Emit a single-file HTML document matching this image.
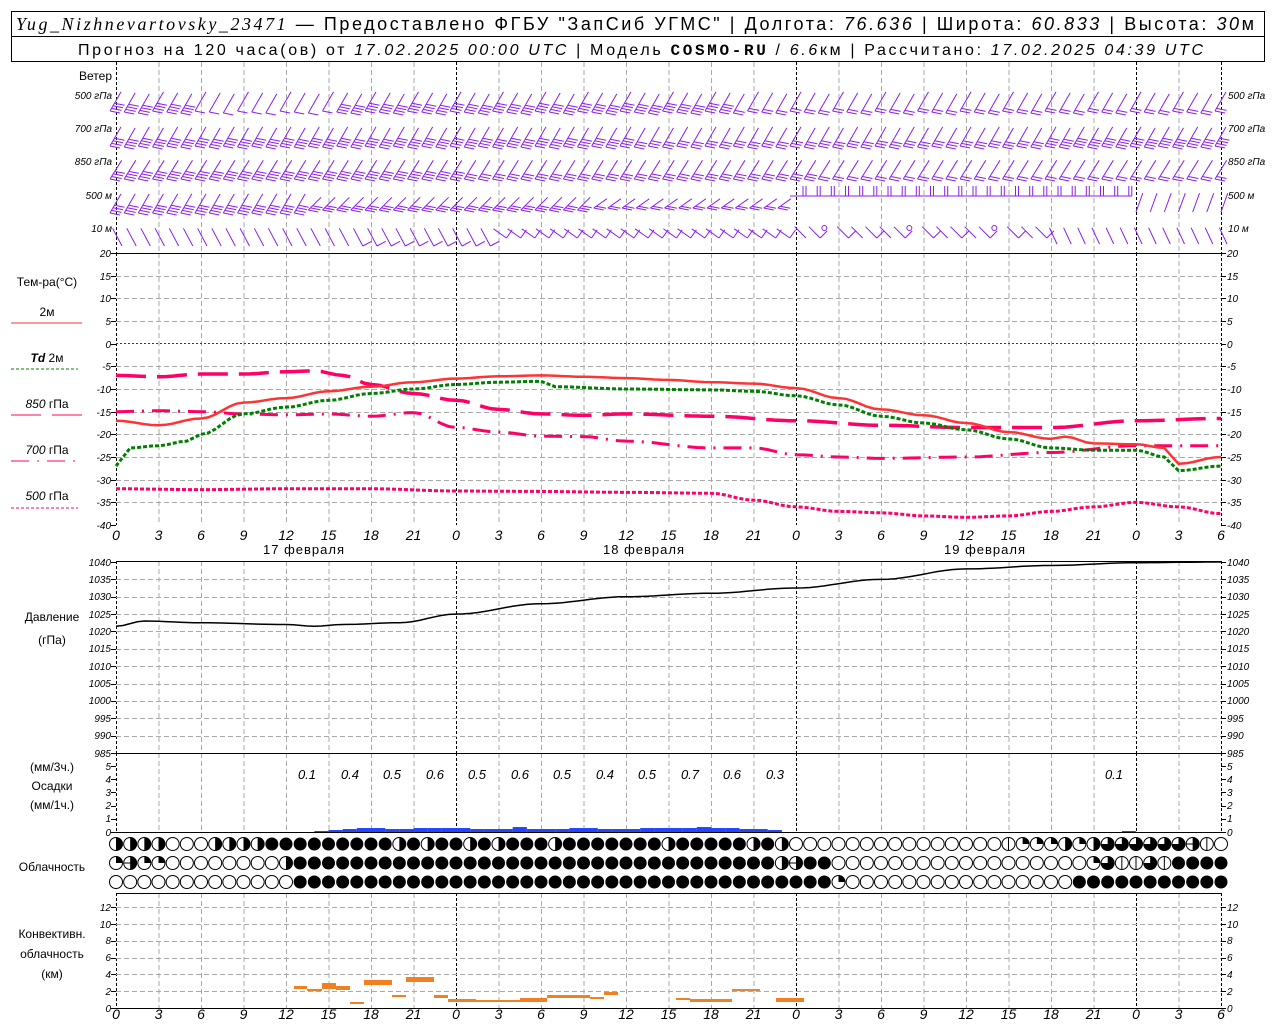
<!DOCTYPE html>
<html><head><meta charset="utf-8"><style>
html,body{margin:0;padding:0;background:#fff;width:1280px;height:1024px;overflow:hidden}
svg{display:block}
text{font-family:"Liberation Sans",sans-serif;fill:#000}
.n{font-size:10px;font-style:italic}
.l{font-size:12px}
</style></head><body>
<svg id="s" width="1280" height="1024" xmlns="http://www.w3.org/2000/svg">
<rect x="11.5" y="11.5" width="1253" height="50" fill="none" stroke="#000"/>
<line x1="11" y1="36.5" x2="1265" y2="36.5" stroke="#000"/>
<text x="16" y="30" style="font-size:18px" textLength="1238" lengthAdjust="spacing"><tspan style="font-family:'Liberation Serif',serif;font-style:italic">Yug_Nizhnevartovsky_23471</tspan> — Предоставлено ФГБУ "ЗапСиб УГМС" | Долгота: <tspan font-style="italic">76.636</tspan> | Широта: <tspan font-style="italic">60.833</tspan> | Высота: <tspan font-style="italic">30</tspan>м</text>
<text x="78" y="55" style="font-size:16px" textLength="1125" lengthAdjust="spacing">Прогноз на 120 часа(ов) от <tspan font-style="italic">17.02.2025 00:00 UTC</tspan>  | Модель <tspan style="font-family:'Liberation Mono',monospace;font-weight:bold">COSMO-RU</tspan> / <tspan font-style="italic">6.6</tspan>км | Рассчитано: <tspan font-style="italic">17.02.2025 04:39 UTC</tspan></text>
<g id="grid"></g>
<g id="data"></g>
<text class="l" x="112" y="80" text-anchor="end">Ветер</text>
<g class="n" text-anchor="end">
<text x="112" y="99">500 гПа</text><text x="112" y="132">700 гПа</text><text x="112" y="165">850 гПа</text><text x="112" y="199">500 м</text><text x="112" y="232">10   м</text>
</g>
<g class="n">
<text x="1228" y="99">500 гПа</text><text x="1228" y="132">700 гПа</text><text x="1228" y="165">850 гПа</text><text x="1228" y="199">500 м</text><text x="1228" y="232">10   м</text>
</g>
<text class="l" x="47" y="286" text-anchor="middle">Тем-ра(°C)</text>
<text class="l" x="47" y="316" text-anchor="middle">2м</text>
<line x1="11" y1="323" x2="82" y2="323" stroke="#ff3333"/>
<text class="l" x="47" y="362" text-anchor="middle"><tspan font-style="italic" font-weight="bold">Td</tspan>  2м</text>
<line x1="11" y1="369" x2="78" y2="369" stroke="#008000" stroke-dasharray="3,2"/>
<text class="l" x="47" y="408" text-anchor="middle"><tspan font-style="italic">850</tspan> гПа</text>
<line x1="11" y1="415" x2="82" y2="415" stroke="#ff0066" stroke-dasharray="30,11"/>
<text class="l" x="47" y="454" text-anchor="middle"><tspan font-style="italic">700</tspan> гПа</text>
<line x1="11" y1="461" x2="78" y2="461" stroke="#ff0066" stroke-dasharray="18,8,2,8"/>
<text class="l" x="47" y="500" text-anchor="middle"><tspan font-style="italic">500</tspan> гПа</text>
<line x1="11" y1="508" x2="78" y2="508" stroke="#ff0066" stroke-dasharray="3,2"/>
<text class="l" x="52" y="621" text-anchor="middle">Давление</text>
<text class="l" x="52" y="644" text-anchor="middle">(гПа)</text>
<text class="l" x="52" y="771" text-anchor="middle">(мм/3ч.)</text>
<text class="l" x="52" y="790" text-anchor="middle">Осадки</text>
<text class="l" x="52" y="809" text-anchor="middle">(мм/1ч.)</text>
<text class="l" x="52" y="871" text-anchor="middle">Облачность</text>
<text class="l" x="52" y="938" text-anchor="middle">Конвективн.</text>
<text class="l" x="52" y="958" text-anchor="middle">облачность</text>
<text class="l" x="52" y="978" text-anchor="middle">(км)</text>
<g class="n" text-anchor="end">
<text x="111" y="257">20</text><text x="111" y="280">15</text><text x="111" y="302">10</text><text x="111" y="325">5</text><text x="111" y="348">0</text><text x="111" y="370">-5</text><text x="111" y="393">-10</text><text x="111" y="416">-15</text><text x="111" y="438">-20</text><text x="111" y="461">-25</text><text x="111" y="484">-30</text><text x="111" y="506">-35</text><text x="111" y="529">-40</text>
<text x="111" y="566">1040</text><text x="111" y="583">1035</text><text x="111" y="600">1030</text><text x="111" y="618">1025</text><text x="111" y="635">1020</text><text x="111" y="652">1015</text><text x="111" y="670">1010</text><text x="111" y="687">1005</text><text x="111" y="704">1000</text><text x="111" y="722">995</text><text x="111" y="739">990</text><text x="111" y="757">985</text>
<text x="111" y="770">5</text><text x="111" y="783">4</text><text x="111" y="796">3</text><text x="111" y="809">2</text><text x="111" y="822">1</text><text x="111" y="836">0</text>
<text x="111" y="911">12</text><text x="111" y="928">10</text><text x="111" y="944">8</text><text x="111" y="961">6</text><text x="111" y="978">4</text><text x="111" y="995">2</text><text x="111" y="1012">0</text>
</g>
<g class="n">
<text x="1227" y="257">20</text><text x="1227" y="280">15</text><text x="1227" y="302">10</text><text x="1227" y="325">5</text><text x="1227" y="348">0</text><text x="1227" y="370">-5</text><text x="1227" y="393">-10</text><text x="1227" y="416">-15</text><text x="1227" y="438">-20</text><text x="1227" y="461">-25</text><text x="1227" y="484">-30</text><text x="1227" y="506">-35</text><text x="1227" y="529">-40</text>
<text x="1227" y="566">1040</text><text x="1227" y="583">1035</text><text x="1227" y="600">1030</text><text x="1227" y="618">1025</text><text x="1227" y="635">1020</text><text x="1227" y="652">1015</text><text x="1227" y="670">1010</text><text x="1227" y="687">1005</text><text x="1227" y="704">1000</text><text x="1227" y="722">995</text><text x="1227" y="739">990</text><text x="1227" y="757">985</text>
<text x="1227" y="770">5</text><text x="1227" y="783">4</text><text x="1227" y="796">3</text><text x="1227" y="809">2</text><text x="1227" y="822">1</text><text x="1227" y="836">0</text>
<text x="1227" y="911">12</text><text x="1227" y="928">10</text><text x="1227" y="944">8</text><text x="1227" y="961">6</text><text x="1227" y="978">4</text><text x="1227" y="995">2</text><text x="1227" y="1012">0</text>
</g>
<g style="font-size:14px;font-style:italic" text-anchor="middle">
<text x="116" y="540">0</text><text x="158.5" y="540">3</text><text x="201" y="540">6</text><text x="243.5" y="540">9</text><text x="286" y="540">12</text><text x="328.5" y="540">15</text><text x="371" y="540">18</text><text x="413.5" y="540">21</text><text x="456" y="540">0</text><text x="498.5" y="540">3</text><text x="541" y="540">6</text><text x="583.5" y="540">9</text><text x="626" y="540">12</text><text x="668.5" y="540">15</text><text x="711" y="540">18</text><text x="753.5" y="540">21</text><text x="796" y="540">0</text><text x="838.5" y="540">3</text><text x="881" y="540">6</text><text x="923.5" y="540">9</text><text x="966" y="540">12</text><text x="1008.5" y="540">15</text><text x="1051" y="540">18</text><text x="1093.5" y="540">21</text><text x="1136" y="540">0</text><text x="1178.5" y="540">3</text><text x="1221" y="540">6</text>
<text x="116" y="1019">0</text><text x="158.5" y="1019">3</text><text x="201" y="1019">6</text><text x="243.5" y="1019">9</text><text x="286" y="1019">12</text><text x="328.5" y="1019">15</text><text x="371" y="1019">18</text><text x="413.5" y="1019">21</text><text x="456" y="1019">0</text><text x="498.5" y="1019">3</text><text x="541" y="1019">6</text><text x="583.5" y="1019">9</text><text x="626" y="1019">12</text><text x="668.5" y="1019">15</text><text x="711" y="1019">18</text><text x="753.5" y="1019">21</text><text x="796" y="1019">0</text><text x="838.5" y="1019">3</text><text x="881" y="1019">6</text><text x="923.5" y="1019">9</text><text x="966" y="1019">12</text><text x="1008.5" y="1019">15</text><text x="1051" y="1019">18</text><text x="1093.5" y="1019">21</text><text x="1136" y="1019">0</text><text x="1178.5" y="1019">3</text><text x="1221" y="1019">6</text>
</g>
<g style="font-size:13px" text-anchor="middle" letter-spacing="1">
<text x="304" y="554">17 февраля</text><text x="644" y="554">18 февраля</text><text x="985" y="554">19 февраля</text>
</g>
<g style="font-size:13px;font-style:italic" text-anchor="middle">
<text x="307" y="779">0.1</text><text x="350" y="779">0.4</text><text x="392" y="779">0.5</text><text x="435" y="779">0.6</text><text x="477" y="779">0.5</text><text x="520" y="779">0.6</text><text x="562" y="779">0.5</text><text x="605" y="779">0.4</text><text x="647" y="779">0.5</text><text x="690" y="779">0.7</text><text x="732" y="779">0.6</text><text x="775" y="779">0.3</text><text x="1114" y="779">0.1</text>
</g>
</svg>
<script>
(function(){
var NS="http://www.w3.org/2000/svg";
var G=document.getElementById('grid'),D=document.getElementById('data');
function el(p,t,a){var e=document.createElementNS(NS,t);for(var k in a)e.setAttribute(k,a[k]);p.appendChild(e);return e;}
function X(h){return 116+h*340/24;}
var segs=[[62,253],[253,525],[561,753],[753,832],[893,1008]];
for(var k=0;k<=26;k++){var x=X(3*k)+0.5;var day=(k%8==0)||k==26;
 segs.forEach(function(s){el(G,'line',{x1:x,y1:s[0],x2:x,y2:s[1],stroke:day?'#000':'#aaa','stroke-dasharray':day?'3,2':'5,3'});});}
function hg(y){el(G,'line',{x1:116,y1:y+.5,x2:1221,y2:y+.5,stroke:'#aaa','stroke-dasharray':'5,3'});}
for(var v=15;v>=-35;v-=5){if(v!=0)hg(Math.round(253+(20-v)*272/60));}
for(var p=1035;p>985;p-=5)hg(Math.round(562+(1040-p)*191/55));
for(var c=2;c<=12;c+=2)hg(Math.round(1008-c*101/12));
el(G,'line',{x1:116,y1:343.5,x2:1221,y2:343.5,stroke:'#0033ff','stroke-dasharray':'2,2'});
[253,561,753,832,893,1008].forEach(function(y){el(G,'line',{x1:116,y1:y+.5,x2:1221,y2:y+.5,stroke:'#000'});});
function ticks(ys){ys.forEach(function(y){el(G,'line',{x1:111,y1:y+.5,x2:116,y2:y+.5,stroke:'#000'});el(G,'line',{x1:1221,y1:y+.5,x2:1226,y2:y+.5,stroke:'#000'});});}
var t=[];for(var v=20;v>=-40;v-=5)t.push(Math.round(253+(20-v)*272/60));ticks(t);
t=[];for(var p=1040;p>=985;p-=5)t.push(Math.round(562+(1040-p)*191/55));ticks(t);
t=[];for(var q=0;q<=5;q++)t.push(Math.round(832-q*13.2));ticks(t);
t=[];for(var c=0;c<=12;c+=2)t.push(Math.round(1008-c*101/12));ticks(t);
function TY(v){return 253+(20-v)*272/60;}
function interp(pts){var out=[];for(var i=0;i<pts.length-1;i++){var a=pts[i],b=pts[i+1];for(var h=a[0];h<b[0];h+=0.5){var f=(h-a[0])/(b[0]-a[0]);out.push([h,a[1]+(b[1]-a[1])*(0.5-0.5*Math.cos(Math.PI*f))]);}}out.push(pts[pts.length-1]);return out;}
function curve(pts,fy,attrs){var d=interp(pts).map(function(p,i){return (i?'L':'M')+X(p[0]).toFixed(1)+' '+fy(p[1]).toFixed(1);}).join('');attrs.d=d;attrs.fill='none';el(D,'path',attrs);}
curve([[0,-32],[6,-32.2],[12,-32],[18,-32],[24,-32.5],[30,-32.6],[36,-32.8],[42,-33],[45,-34.5],[48,-36],[51,-37],[54,-37.3],[57,-38],[60,-38.3],[63,-38],[66,-37],[69,-36],[72,-35],[75,-36],[78,-37.5]],TY,{stroke:'#ff0066','stroke-width':3,'stroke-dasharray':'4,2'});
curve([[0,-15],[3,-14.8],[6,-15],[9,-15.5],[12,-15.7],[15,-15.5],[18,-16],[21,-15.2],[24,-18.5],[27,-19.5],[30,-20.4],[33,-20.5],[36,-21.5],[42,-23],[45,-23],[48,-24.5],[51,-25],[54,-25.3],[60,-25],[66,-24],[72,-22.5],[78,-22.5]],TY,{stroke:'#ff0066','stroke-width':3,'stroke-dasharray':'18,8,2,8'});
curve([[0,-7],[3,-7.3],[6,-6.7],[9,-6.7],[12,-6.2],[14,-6],[16,-7],[18,-9],[21,-11],[24,-12.5],[27,-14.5],[30,-15.5],[33,-15.8],[36,-15.5],[42,-16],[48,-17],[54,-18],[60,-18.5],[66,-18.5],[72,-17],[78,-16.5]],TY,{stroke:'#ff0066','stroke-width':3.5,'stroke-dasharray':'30,11'});
curve([[0,-27],[1,-23],[3,-22.5],[5,-21.5],[6,-20],[9,-15.5],[12,-14],[15,-12.5],[18,-11],[21,-10],[24,-9],[27,-8.5],[30,-8.3],[31,-9.5],[36,-10],[42,-10.2],[45,-10.5],[48,-11.5],[51,-13.5],[54,-16],[57,-17.5],[60,-19],[63,-21],[66,-23],[69,-23.5],[72,-23.5],[74,-25],[75,-28],[78,-27]],TY,{stroke:'#008000','stroke-width':3,'stroke-dasharray':'4,2'});
curve([[0,-17],[3,-18],[6,-16.5],[9,-13],[12,-12],[15,-10.5],[18,-9.5],[21,-8.5],[24,-7.7],[27,-7.2],[30,-7],[33,-7.3],[36,-7.6],[39,-8],[42,-8.5],[45,-8.8],[48,-9.8],[51,-12],[54,-14.5],[57,-15.8],[60,-17.5],[63,-19.5],[66,-21],[67,-20.5],[69,-22],[72,-22.2],[74,-23],[75,-26.5],[78,-25]],TY,{stroke:'#ff3333','stroke-width':2.5});
curve([[0,1021.5],[2,1023],[6,1022.5],[12,1022],[14,1021.5],[16,1022],[20,1022.5],[24,1025],[30,1028],[36,1030],[42,1031],[48,1032.5],[54,1035],[60,1038],[66,1039],[72,1039.8],[78,1040]],function(p){return 562+(1040-p)*191/55;},{stroke:'#000','stroke-width':1.5});
var pr=[0,0,0,0,0,0,0,0,0,0,0,0,0,0,.05,.1,.15,.2,.2,.15,.15,.2,.2,.2,.2,.15,.15,.15,.25,.15,.15,.15,.2,.2,.15,.15,.15,.2,.2,.2,.2,.25,.2,.2,.15,.15,.1];
pr.forEach(function(v,h){if(v>0){var hh=Math.max(1,v*13.2*1.5);el(D,'rect',{x:X(h),y:832-hh,width:14.2,height:hh,fill:'#2244ff'});}});
el(D,'rect',{x:X(71),y:831,width:14,height:1,fill:'#2244ff'});
var cv=[[294,307,986,989],[307,322,989,991],[322,336,983,989],[336,350,986,990],[350,364,1002,1004],[364,378,980,985],[378,392,980,985],[392,406,995,997],[406,434,977,982],[434,448,995,998],[448,476,999,1002],[476,520,1000,1002],[520,547,998,1002],[547,590,995,998],[590,604,997,999],[604,618,992,995],[676,690,998,1000],[690,732,999,1002],[732,760,989,991],[776,804,998,1002]];
cv.forEach(function(b){el(D,'rect',{x:b[0],y:b[2],width:b[1]-b[0],height:b[3]-b[2],fill:b[0]==732?'#d98a4a':'#f08020'});});
var rows=[
"HHHHEEEHHHHFFFFFFFFFHFHFFHFHFFFHFFFFFFFHFFFFFHFHEEEEEEEEEEEEEEEVQQQHQHTTTTTTOV",
"QOQQEEEEEEEEHFFFFFFFFFFFFFFFFFFFFFFFFFFFFFFFFFFHOFFEEEEEEEEEEEEEEEEEEQTVVTVFFFF",
"EEEEEEEEEEEEEFFFFFFFFFFFFFFFFFFFFFFFFFFFFFFFFFFFFFFQEEEEEEEEEEEEEEEEFFFFFFFFFFF"];
var ry=[844,863,882];
rows.forEach(function(r,i){for(var h=0;h<79;h++){var c=r[h]||'E';var cx=X(h),cy=ry[i],R=6.5;
 if(c=='F'){el(D,'circle',{cx:cx,cy:cy,r:R,fill:'#000'});continue;}
 el(D,'circle',{cx:cx,cy:cy,r:R,fill:'#fff',stroke:'#000'});
 if(c=='H')el(D,'path',{d:'M'+cx+' '+(cy-R)+'A'+R+' '+R+' 0 0 1 '+cx+' '+(cy+R)+'Z',fill:'#000'});
 if(c=='Q')el(D,'path',{d:'M'+cx+' '+cy+'L'+cx+' '+(cy-R)+'A'+R+' '+R+' 0 0 1 '+(cx+R)+' '+cy+'Z',fill:'#000'});
 if(c=='T')el(D,'path',{d:'M'+cx+' '+cy+'L'+cx+' '+(cy-R)+'A'+R+' '+R+' 0 1 1 '+(cx-R)+' '+cy+'Z',fill:'#000'});
 if(c=='V')el(D,'line',{x1:cx,y1:cy-R,x2:cx,y2:cy+R,stroke:'#000'});
 if(c=='O'){el(D,'path',{d:'M'+cx+' '+(cy-R)+'A'+R+' '+R+' 0 0 1 '+cx+' '+(cy+R)+'Z',fill:'#000'});el(D,'line',{x1:cx-R,y1:cy,x2:cx+R,y2:cy,stroke:'#000'});}
}});
var col='#8a1ef0';
// staff from base (x,y) in direction ang (0=up, clockwise); feathers at base side, rotated toward clockwise perpendicular, flattened
function barb(x,y,ang,n,len,flat){
 var a=ang*Math.PI/180,dx=Math.sin(a),dy=-Math.cos(a);
 var d='M'+x.toFixed(1)+' '+y.toFixed(1)+'L'+(x+dx*len).toFixed(1)+' '+(y+dy*len).toFixed(1);
 var px=-dy,py=dx;
 if(flat){px=1;py=0.2;}
 for(var i=0;i<n;i++){var bx=x+dx*i*3,by=y+dy*i*3;
  d+='M'+bx.toFixed(1)+' '+by.toFixed(1)+'L'+(bx+px*10).toFixed(1)+' '+(by+py*10).toFixed(1);}
 el(D,'path',{d:d,stroke:col,fill:'none','stroke-width':1});
}
for(var h=0;h<=78;h++){var x=X(h);
 var n5=(h>5&&h<16)?1:((h<30)||(h>=30&&h<44))?4:2;
 barb(x-6,112+((h%3)-1),30,n5,22,true);
 barb(x-6,146+(h%2),30,(h>36&&h<66)?3:4,22,true);
 barb(x-6,179,32,h<25?4:(h<50?3:2),22,true);
 if(h<14)barb(x-6,213,30,4,22,true);
 else if(h<34)barb(x-6,210,45,3,18,true);
 else if(h<48)barb(x-4,208,55,2,16,true);
 else if(h<72)barb(x+10,196,270,2,16,false);
 else barb(x,212,20,0,20,false);
 if(h<27){barb(x+6,246,-28,h>16?1:0,20,false);}
 else if(h<48){barb(x+8,238,-55,1,16,false);}
 else if(h<66){if(h%6==2)el(D,'circle',{cx:x,cy:228,r:2.5,fill:'none',stroke:col});else barb(x+10,238,-45,h%2,16,false);}
 else {barb(x+6,244,-25,0,18,false);}
}
})();
</script>
</body></html>
